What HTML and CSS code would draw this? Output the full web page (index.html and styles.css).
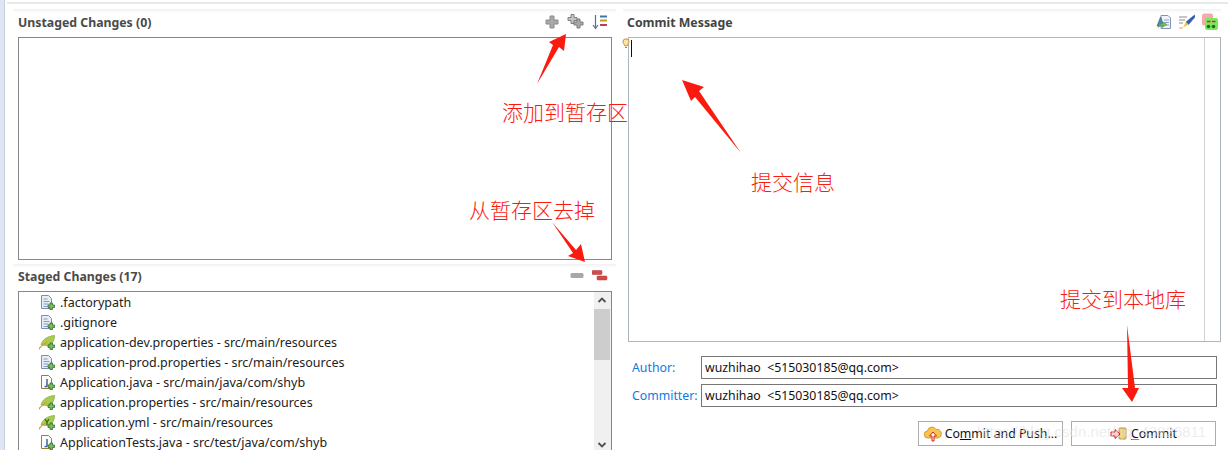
FILE: index.html
```html
<!DOCTYPE html>
<html lang="en">
<head>
    <meta charset="UTF-8">
    <meta name="viewport" content="width=device-width, initial-scale=1.0">
    <title>Git Staging</title>
    <link rel="stylesheet" href="styles.css">
</head>
<body>
    <svg class="defs" width="0" height="0">
        <defs>
            <g id="plus-badge">
                <path d="M11 9h2.500v2h2v2.500h-2v2H11v-2H9V11h2z" fill="#79bd62" stroke="#2f6b2a" stroke-width=".8"/>
            </g>
            <g id="file-icon">
                <path d="M2.500 1.500h7l3 3v10h-10z" fill="#e8edf6" stroke="#7d8ca8"/>
                <path d="M4.500 5h4M4.500 7.500h6M4.500 10h5M4.500 12.500h4" stroke="#7f9ac4"/>
                <use href="#plus-badge"/>
            </g>
            <g id="java-icon">
                <path d="M2.500 1.500h7l3 3v10h-10z" fill="#fdfcf6" stroke="#9a7d3c"/>
                <path d="M8 5v6.500q0 1.500-2.500 1" fill="none" stroke="#3a62a8" stroke-width="1.500"/>
                <use href="#plus-badge"/>
            </g>
            <g id="leaf-icon">
                <path d="M2 11C3 6 8 2 15.500 1.500c0 6-3 9.500-8 10z" fill="#a9cc4e" stroke="#86a83a" stroke-width=".7"/>
                <path d="M-.5 15.500C2 12 4 10 8 8.500" fill="none" stroke="#e0913a" stroke-width="1.300"/>
                <use href="#plus-badge"/>
            </g>
        </defs>
    </svg>

    <div class="side-strip"></div>

    <div class="workspace">
        <section class="left-pane">
            <div class="pane-part unstaged">
                <div class="section-head">
                    <h2>Unstaged Changes (0)</h2>
                    <div class="tools">
                        <svg width="16" height="16" viewBox="0 0 16 16"><path d="M6 2h4v4h4v4h-4v4H6v-4H2V6h4z" fill="#a8a8a8" stroke="#8c8c8c"/></svg>
                        <svg width="18" height="16" viewBox="0 0 18 16"><path d="M4 .5h3v3h3v3H7v3H4v-3H1v-3h3z" fill="#c4c4c4" stroke="#7f7f7f"/><path d="M10 5h3v3h3v3h-3v3h-3v-3H7V8h3z" fill="#a8a8a8" stroke="#7f7f7f"/></svg>
                        <svg width="16" height="16" viewBox="0 0 16 16"><path d="M3.500 1v12" stroke="#55708c" stroke-width="1.200"/><path d="M1 11l2.500 3.500L6 11" fill="none" stroke="#55708c" stroke-width="1.200"/><path d="M8 2.500h7" stroke="#3f74a8" stroke-width="2"/><path d="M8 6.500h7" stroke="#b8a028" stroke-width="2"/><path d="M8 11h7" stroke="#c23a5a" stroke-width="2"/></svg>
                    </div>
                </div>
                <div class="list-box empty-box"></div>
            </div>

            <div class="pane-part staged">
                <div class="section-head">
                    <h2>Staged Changes (17)</h2>
                    <div class="tools remove-tools">
                        <svg width="14" height="16" viewBox="0 0 14 16"><rect x=".5" y="5" width="13" height="5" rx="1.500" fill="#a8a8a8"/></svg>
                        <svg width="16" height="16" viewBox="0 0 16 16"><rect x="0" y="2.500" width="10" height="4" rx="1" fill="#d24a4a" stroke="#b53535" stroke-width=".5"/><rect x="5" y="8" width="10" height="4" rx="1" fill="#d24a4a" stroke="#b53535" stroke-width=".5"/></svg>
                    </div>
                </div>
                <div class="list-box file-box">
                    <ul class="file-list">
                        <li><svg width="16" height="16" viewBox="0 0 16 16"><use href="#file-icon"/></svg>.factorypath</li>
                        <li><svg width="16" height="16" viewBox="0 0 16 16"><use href="#file-icon"/></svg>.gitignore</li>
                        <li><svg width="16" height="16" viewBox="0 0 16 16"><use href="#leaf-icon"/></svg>application-dev.properties - src/main/resources</li>
                        <li><svg width="16" height="16" viewBox="0 0 16 16"><use href="#file-icon"/></svg>application-prod.properties - src/main/resources</li>
                        <li><svg width="16" height="16" viewBox="0 0 16 16"><use href="#java-icon"/></svg>Application.java - src/main/java/com/shyb</li>
                        <li><svg width="16" height="16" viewBox="0 0 16 16"><use href="#leaf-icon"/></svg>application.properties - src/main/resources</li>
                        <li><svg width="16" height="16" viewBox="0 0 16 16"><use href="#leaf-icon"/><path d="M6 5l2 3 2-3M8 8v3" fill="none" stroke="#2d6b1e" stroke-width="1.300"/></svg>application.yml - src/main/resources</li>
                        <li><svg width="16" height="16" viewBox="0 0 16 16"><use href="#java-icon"/></svg>ApplicationTests.java - src/test/java/com/shyb</li>
                    </ul>
                    <div class="scrollbar">
                        <svg class="scroll-arrow" width="16" height="16" viewBox="0 0 16 16"><path d="M4.500 9.500L8 6l3.500 3.500" fill="none" stroke="#505050" stroke-width="1.800"/></svg>
                        <div class="scroll-thumb"></div>
                        <svg class="scroll-arrow bottom" width="16" height="16" viewBox="0 0 16 16"><path d="M4.500 6.500L8 10l3.500-3.500" fill="none" stroke="#505050" stroke-width="1.800"/></svg>
                    </div>
                </div>
            </div>
        </section>

        <section class="right-pane">
            <div class="section-head commit-head">
                <h2>Commit Message</h2>
                <div class="tools">
                    <svg width="16" height="16" viewBox="0 0 16 16"><path d="M5 1.500h7l2.500 2.500v10.500H5z" fill="#f0f4fa" stroke="#8494b0"/><path d="M8 6h5M8 8.500h5M9 11h4" stroke="#8aa3c8"/><path d="M4.500 3L1 12h7z" fill="#4f86b8" stroke="#2f5f8c" stroke-width=".6"/><path d="M2 13.500c1-3 3-4 5-4l-1-2 5 3-5 3 1-2c-2 0-3.500.5-5 2z" fill="#7cba5e" stroke="#4a8c3a" stroke-width=".5"/></svg>
                    <svg width="16" height="16" viewBox="0 0 16 16"><path d="M0 3h8M0 6h6M0 9h4" stroke="#8a8a8a"/><path d="M15.500 1L7 8l2.500 2.500L16 3z" fill="#2f5fb5" stroke="#22458c" stroke-width=".5"/><path d="M7 8l-3 5.500 5.500-3z" fill="#f0c040"/><path d="M0 14h4" stroke="#e8a830"/></svg>
                    <svg width="16" height="18" viewBox="0 0 16 18"><rect x="0" y=".5" width="11" height="12" rx="2" fill="#f4a8b0"/><rect x="3" y="5" width="13" height="12" rx="2" fill="#7ce85c"/><path d="M5 8.500h3.500M10 8.500h3.500" stroke="#c22d2d" stroke-width="1.600"/><circle cx="6.500" cy="13.500" r="1.800" fill="#1d6b24"/><circle cx="11.500" cy="13.500" r="1.800" fill="#1d6b24"/></svg>
                </div>
            </div>

            <div class="message-box">
                <svg class="hint-bulb" width="8" height="11" viewBox="0 0 8 11"><path d="M4 .8a3 3 0 0 1 3 3c0 1.600-1.500 2.400-1.700 4H2.700C2.500 6.200 1 5.400 1 3.800a3 3 0 0 1 3-3z" fill="#fbe6a8" stroke="#d98b2b"/><path d="M3 9.500h2" stroke="#b08040"/></svg>
                <div class="caret"></div>
                <div class="ruler"></div>
            </div>

            <div class="person-rows">
                <div class="person-row">
                    <label>Author:</label>
                    <div class="person-input">wuzhihao  &lt;515030185@qq.com&gt;</div>
                </div>
                <div class="person-row">
                    <label>Committer:</label>
                    <div class="person-input">wuzhihao  &lt;515030185@qq.com&gt;</div>
                </div>
            </div>

            <div class="commit-buttons">
                <button>
                    <svg width="18" height="18" viewBox="0 0 18 18"><path d="M4 13a3.500 3.500 0 0 1-.5-7A4.500 4.500 0 0 1 12 4.500 3.500 3.500 0 0 1 14 13z" fill="#f7c54f" stroke="#d99a26"/><path d="M9 7l-3.500 4H8v5h2v-5h2.500z" fill="#fff" stroke="#d42020"/></svg>
                    <span>Co<u>m</u>mit and Push...</span>
                </button>
                <button>
                    <svg width="18" height="16" viewBox="0 0 18 16"><rect x="9" y="2" width="7" height="11" rx="1" fill="#f0cf70" stroke="#b8923a"/><path d="M1 6h4V3.500L10 8l-5 4.500V10H1z" fill="#f8d0d0" stroke="#d42020"/></svg>
                    <span><u>C</u>ommit</span>
                </button>
            </div>
        </section>
    </div>

    <div class="watermark">https://blog.csdn.net/qq_43826811</div>

    <!-- notes drawn on top of the screenshot -->
    <svg class="arrows" width="1228" height="450" viewBox="0 0 1228 450">
        <path d="M537 84L553 45L549 42L566 34L564 51L559 47Z" fill="#fb1a0f"/>
        <path d="M741 153L695 97L691 101L682 80L704 87L699 91Z" fill="#fb1a0f"/>
        <path d="M552 222L576 250L581 244L585 262L568 256L573 253Z" fill="#fb1a0f"/>
        <path d="M1127 325L1135 388L1139 388L1132 402L1122 388L1128 388Z" fill="#fb1a0f"/>
    </svg>
    <div class="note note-add">添加到暂存区</div>
    <div class="note note-info">提交信息</div>
    <div class="note note-remove">从暂存区去掉</div>
    <div class="note note-commit">提交到本地库</div>
</body>
</html>
```

FILE: styles.css
```css
html, body {
    margin: 0;
    padding: 0;
    height: 100%;
}
body {
    display: flex;
    position: relative;
    overflow: hidden;
    background-color: #fff;
    font-family: "Noto Sans", "Noto Sans CJK SC", sans-serif;
    font-size: 12.3px;
    color: #222;
}
.defs {
    position: absolute;
}
.side-strip {
    width: 4px;
    flex: none;
    background-color: #dfe5f5;
    border-right: 1px solid #c9cfdd;
}

/* Main area */
.workspace {
    flex: 1;
    display: flex;
    gap: 16px;
    padding: 2px 11px 0 13px;
    min-width: 0;
    background: linear-gradient(#e8e8e8, #e8e8e8) 2px 2px / 100% 2px no-repeat;
}
.left-pane {
    width: 594px;
    flex: none;
    display: flex;
    flex-direction: column;
}
.right-pane {
    flex: 1;
    min-width: 0;
    display: flex;
    flex-direction: column;
}
.section-head {
    height: 28px;
    margin: 7px -4px 0 -5px;
    flex: none;
    display: flex;
    align-items: center;
    justify-content: space-between;
    box-sizing: border-box;
    padding: 0 8px 2px 5px;
    background: linear-gradient(#f1f1f1, #fff) top / 100% 4px no-repeat;
}
.section-head h2 {
    margin: 0;
    font-size: 12.3px;
    font-weight: 700;
    color: #4a4a4a;
}
.tools {
    display: flex;
    align-items: center;
    gap: 7px;
}
.remove-tools {
    gap: 8px;
}
.commit-head {
    padding: 0 3px 2px 4px;
}
.commit-head h2 {
    color: #444;
}

/* Change lists */
.list-box {
    box-sizing: border-box;
    border: 1px solid #85878c;
    background-color: #fff;
}
.empty-box {
    height: 223px;
}
.staged .section-head {
    height: 27px;
    margin-top: 4px;
    padding-bottom: 3px;
}
.file-box {
    height: 170px;
    display: flex;
}
.file-list {
    flex: 1;
    margin: 0;
    padding: 0 0 0 20px;
    list-style: none;
    overflow: hidden;
}
.file-list li {
    height: 20px;
    display: flex;
    align-items: center;
    gap: 5px;
    font-size: 12.5px;
    white-space: nowrap;
}
.scrollbar {
    width: 17px;
    flex: none;
    display: flex;
    flex-direction: column;
    background-color: #f0f0f0;
}
.scroll-arrow {
    flex: none;
    height: 17px;
}
.scroll-thumb {
    width: 16px;
    height: 51px;
    flex: none;
    background-color: #cdcdcd;
}
.scroll-arrow.bottom {
    margin-top: 76px;
}

/* Commit message */
.message-box {
    position: relative;
    height: 305px;
    flex: none;
    box-sizing: border-box;
    margin-right: -4px;
    border: 1px solid #adb5bf;
    background-color: #fff;
}
.hint-bulb {
    position: absolute;
    left: -7px;
    top: 0;
}
.caret {
    position: absolute;
    left: 2px;
    top: 2px;
    width: 1px;
    height: 17px;
    background-color: #111;
}
.ruler {
    position: absolute;
    right: 15px;
    top: 0;
    bottom: 0;
    width: 1px;
    background-color: #d0d3d8;
}
.person-rows {
    display: flex;
    flex-direction: column;
    gap: 5px;
    margin-top: 14px;
}
.person-row {
    display: flex;
    align-items: center;
    padding-left: 4px;
}
.person-row label {
    width: 69px;
    flex: none;
    color: #0d7ae4;
}
.person-input {
    flex: 1;
    height: 23px;
    box-sizing: border-box;
    padding-left: 3px;
    border: 1px solid #777;
    line-height: 21px;
    color: #111;
    white-space: pre;
}
.commit-buttons {
    display: flex;
    justify-content: flex-end;
    gap: 8px;
    margin-top: 14px;
    padding-right: 1px;
}
.commit-buttons button {
    width: 145px;
    height: 25px;
    display: flex;
    align-items: center;
    justify-content: center;
    gap: 3px;
    padding: 0;
    border: 1px solid #adadad;
    background-color: #fff;
    font-family: inherit;
    font-size: 12.3px;
    color: #111;
}

/* Overlays on the screenshot */
.watermark {
    position: absolute;
    left: 977px;
    top: 423px;
    font-family: "Liberation Sans", sans-serif;
    font-size: 15px;
    color: rgba(225, 225, 225, .6);
    white-space: nowrap;
}
.arrows {
    position: absolute;
    left: 0;
    top: 0;
}
.note {
    position: absolute;
    font-family: "Noto Sans CJK SC", sans-serif;
    font-weight: 300;
    font-size: 21px;
    line-height: 26px;
    color: #fb1a0f;
    white-space: nowrap;
}
.note-add {
    left: 502px;
    top: 98px;
}
.note-info {
    left: 751px;
    top: 168px;
}
.note-remove {
    left: 469px;
    top: 196px;
}
.note-commit {
    left: 1060px;
    top: 285px;
}
```
